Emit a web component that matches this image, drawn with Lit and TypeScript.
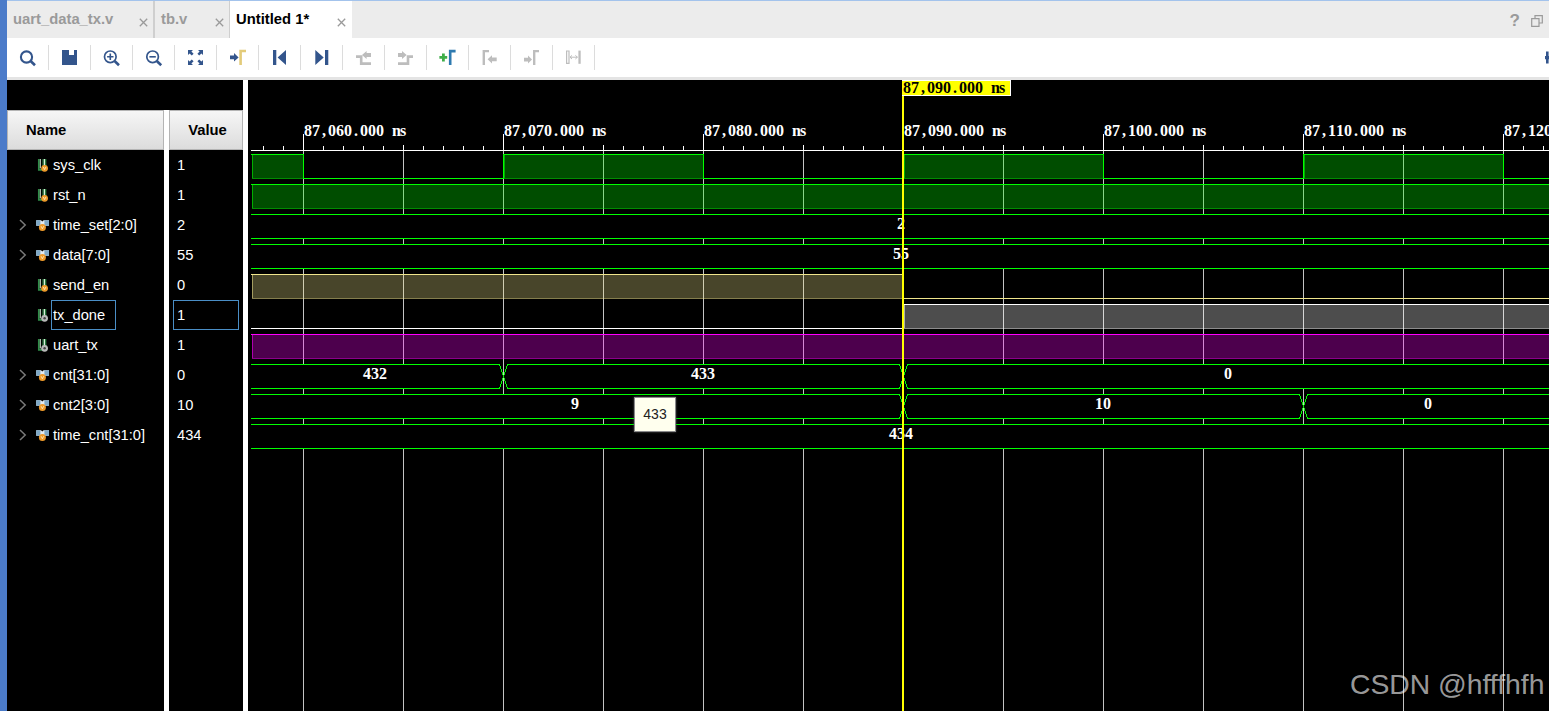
import { LitElement, html, css, svg } from "lit";
import { customElement } from "lit/decorators.js";

const BLUE = "#33558c";
const GREY = "#bdbdbd";

const toolIcons = [
  svg`<circle cx="8.5" cy="9" r="5.6" fill="none" stroke="${BLUE}" stroke-width="2.1"/><path d="M12.6 13 L17 17.2" stroke="${BLUE}" stroke-width="2.6"/>`,
  svg`<path fill-rule="evenodd" d="M2 2 H17 V17 H2 Z M9 2 H14 V7 H9 Z" fill="${BLUE}"/>`,
  svg`<circle cx="8.3" cy="8.8" r="5.8" fill="none" stroke="${BLUE}" stroke-width="1.7"/><path d="M5.1 8.8 H11.5 M8.3 5.6 V12" stroke="${BLUE}" stroke-width="1.6"/><path d="M12.6 13 L17 17.2" stroke="${BLUE}" stroke-width="2.6"/>`,
  svg`<circle cx="8.6" cy="8.8" r="5.8" fill="none" stroke="${BLUE}" stroke-width="1.7"/><path d="M5.4 8.8 H11.8" stroke="${BLUE}" stroke-width="1.6"/><path d="M12.8 13 L17.2 17.2" stroke="${BLUE}" stroke-width="2.6"/>`,
  svg`<path d="M2 2 H7 L5.4 3.6 L7.6 5.8 L5.8 7.6 L3.6 5.4 L2 7 Z M17 2 H12 L13.6 3.6 L11.4 5.8 L13.2 7.6 L15.4 5.4 L17 7 Z M2 17 H7 L5.4 15.4 L7.6 13.2 L5.8 11.4 L3.6 13.6 L2 12 Z M17 17 H12 L13.6 15.4 L11.4 13.2 L13.2 11.4 L15.4 13.6 L17 12 Z" fill="${BLUE}"/>`,
  svg`<path d="M2 7.6 H6 V5 L10.6 9.4 L6 13.6 V11.2 H2 Z" fill="${BLUE}"/><path d="M12.6 17 V3 H18" fill="none" stroke="#e3cb7a" stroke-width="2.6"/>`,
  svg`<path d="M3 2 H6.3 V17 H3 Z M16 2 V17 L7.6 9.5 Z" fill="${BLUE}"/>`,
  svg`<path d="M3.3 2 V17 L11.7 9.5 Z M13 2 H16.3 V17 H13 Z" fill="${BLUE}"/>`,
  svg`<path d="M2 8.6 H7.2 V15.6 H17" fill="none" stroke="${GREY}" stroke-width="2.6"/><path d="M17 5 H12.6 V3 L8 7 L12.6 11 V9 H17 Z" fill="${GREY}"/>`,
  svg`<path d="M2 15.6 H12 V8.6 H17" fill="none" stroke="${GREY}" stroke-width="2.6"/><path d="M2 5 H6 V3 L10.6 7 L6 11 V9 H2 Z" fill="${GREY}"/>`,
  svg`<path d="M1.4 8.1 H4 V5.4 H6.8 V8.1 H9.2 V10.8 H6.8 V13.5 H4 V10.8 H1.4 Z" fill="#3fae49"/><path d="M12.2 17 V3.1 H17.6" fill="none" stroke="#2e7ab0" stroke-width="2.6"/>`,
  svg`<path d="M3.8 17 V3.1 H9" fill="none" stroke="${GREY}" stroke-width="2.4"/><path d="M16.7 9.4 H12 V7.2 L7.6 11.3 L12 15.4 V13.2 H16.7 Z" fill="${GREY}"/>`,
  svg`<path d="M2 9.8 H6 V7.6 L10 11.6 L6 15.6 V13.4 H2 Z" fill="${GREY}"/><path d="M12.2 17 V3.1 H17" fill="none" stroke="${GREY}" stroke-width="2.4"/>`,
  svg`<path d="M2.6 3 H5 V15.4 H2.6 Z" fill="none" stroke="${GREY}" stroke-width="1.2"/><path d="M14.4 2.6 H16.7 V15.8 H14.4 Z" fill="${GREY}"/><path d="M6 9.2 H13.4 M6 9.2 L8 7.4 M6 9.2 L8 11 M13.4 9.2 L11.4 7.4 M13.4 9.2 L11.4 11" fill="none" stroke="${GREY}" stroke-width="1"/>`,
];

const vMark = (cx: number, cy: number) =>
  svg`<path d="M${cx - 1.3} ${cy - 1.3} L${cx} ${cy + 1.3} L${cx + 1.3} ${cy - 1.3}" fill="none" stroke="#fff2c8" stroke-width=".8"/>`;

const scalarIcon = (out: boolean) => svg`
  <svg class="sig" viewBox="0 0 14 14" aria-hidden="true">
    <path d="M2.8 1 V11.8 H6.4" fill="none" stroke="#2f8c48" stroke-width="1.7"/>
    <path d="M4.3 1 V10.4" fill="none" stroke="#d8ecd9" stroke-width="1"/>
    <path d="M7.1 1 V8" fill="none" stroke="#2f8c48" stroke-width="1.2"/>
    <path d="M9.7 1 V8" fill="none" stroke="#2f8c48" stroke-width="1.2"/>
    <path d="M8.4 1 V8" fill="none" stroke="#d8ecd9" stroke-width="1.2"/>
    <circle cx="8.6" cy="10.3" r="3.4" fill="${out ? "#b9b9b9" : "#ee9a2a"}"/>
    ${out ? svg`<circle cx="8.6" cy="10.3" r="1.2" fill="#444"/>` : vMark(8.6, 10.3)}
  </svg>`;

const busIcon = () => svg`
  <svg class="sig" viewBox="0 0 14 14" aria-hidden="true">
    <path d="M0.2 2.2 H5 L6.3 3.6 L7.6 2.2 H13 V7.8 H10 L6.3 9 L2.8 7.8 H0.2 Z" fill="#e2ecf2"/>
    <path d="M0.2 2.2 H4.4 L4.4 7.8 H0.2 Z M8.4 2.2 H13 V7.8 H8.4 Z" fill="#7fa9c6"/>
    <circle cx="6.4" cy="9.5" r="3.5" fill="#ee9a2a"/>
    ${vMark(6.4, 9.5)}
  </svg>`;

const chevron = () => svg`<svg class="chev" viewBox="0 0 8 12" aria-hidden="true"><path d="M1 1 L6.2 6 L1 11" fill="none" stroke="#7a7a7a" stroke-width="1.5"/></svg>`;
const closeX = () => svg`<svg class="close" viewBox="0 0 9 9" aria-hidden="true"><path d="M.8 .8 L8.2 8.2 M8.2 .8 L.8 8.2" stroke="#9a9a9a" stroke-width="1.3"/></svg>`;

type Sig = { name: string; value: string; kind: "s" | "o" | "b"; sel?: boolean };
const signals: Sig[] = [
  { name: "sys_clk", value: "1", kind: "s" },
  { name: "rst_n", value: "1", kind: "s" },
  { name: "time_set[2:0]", value: "2", kind: "b" },
  { name: "data[7:0]", value: "55", kind: "b" },
  { name: "send_en", value: "0", kind: "s" },
  { name: "tx_done", value: "1", kind: "o", sel: true },
  { name: "uart_tx", value: "1", kind: "o" },
  { name: "cnt[31:0]", value: "0", kind: "b" },
  { name: "cnt2[3:0]", value: "10", kind: "b" },
  { name: "time_cnt[31:0]", value: "434", kind: "b" },
];

const END = 1560;
const topOf = (row: number) => 154 + row * 30;

// Every glyph sits in an 8px cell, as in the simulator's fixed-pitch wave font;
// narrow punctuation is centred in its cell.
const pitch = (x: number, text: string) =>
  Array.from(text, (c, i) => x + i * 8 + (c === "," || c === "." ? 2 : 0)).join(" ");

const monoText = (x: number, y: number, text: string, cls = "") =>
  svg`<text class="${cls}" x="${pitch(x, text)}" y="${y}">${text}</text>`;

// One bit signal: spans are the [from, to] ranges during which it is high.
const bit = (row: number, spans: [number, number][], line: string, fill: string, edge: string) => {
  const t = topOf(row);
  const b = t + 24;
  const parts: unknown[] = [];
  let cur = 251;
  for (const [a, z] of spans) {
    if (a > cur) parts.push(svg`<path d="M${cur} ${b + 0.5} H${a}" stroke="${line}"/>`);
    parts.push(svg`<rect x="${a + 1}" y="${t + 1}" width="${z - a - 1}" height="${b - t - 1}" fill="${fill}"/>`);
    parts.push(svg`<path d="M${a + 1.5} ${t + 1} V${b + 0.5} H${z}" fill="none" stroke="${edge}"/>`);
    parts.push(svg`<path d="M${a} ${t + 0.5} H${z + 1}" stroke="${line}"/>`);
    if (z < END) parts.push(svg`<path d="M${z + 0.5} ${t} V${b + 1}" stroke="${line}"/>`);
    if (a > 260) parts.push(svg`<path d="M${a + 0.5} ${t} V${b + 1}" stroke="${line}"/>`);
    cur = z;
  }
  if (cur < END) parts.push(svg`<path d="M${cur} ${b + 0.5} H${END}" stroke="${line}"/>`);
  return parts;
};

// Multi bit signal: flat-started hexagons between transitions.
const bus = (row: number, cuts: number[], labels: [string, number][]) => {
  const t = topOf(row) + 0.5;
  const b = t + 24;
  const m = t + 12;
  const xs = [0, ...cuts, END + 10];
  const parts: unknown[] = [];
  for (let i = 0; i < xs.length - 1; i++) {
    const a = xs[i] + 0.5;
    const z = xs[i + 1] + 0.5;
    const d =
      i === 0
        ? `M251 ${t} H${z - 4} L${z} ${m} L${z - 4} ${b} H251`
        : `M${a + 4} ${t} H${z - 4} L${z} ${m} L${z - 4} ${b} H${a + 4} L${a} ${m} Z`;
    parts.push(svg`<path d="${d}" fill="#000" stroke="#00ff00"/>`);
  }
  for (const [text, x] of labels) {
    parts.push(monoText(x - (text.length * 8) / 2, t + 14.5, text));
  }
  return parts;
};

const range = (from: number, to: number, step: number) => {
  const r: number[] = [];
  for (let x = from; x < to; x += step) r.push(x);
  return r;
};

@customElement("app-root")
export class AppRoot extends LitElement {
  static styles = css`
    :host { display: block; height: 100vh; overflow: hidden; font-family: "Liberation Sans", Arial, sans-serif; }
    .app { display: flex; height: 100%; position: relative; background: #fff; overflow: hidden; }
    .edge { width: 7px; flex: none; background: #4b7bc9; }
    .content { flex: 1; min-width: 0; display: flex; flex-direction: column; }
    .topline { height: 1px; flex: none; background: #a3c3ec; }
    .tabs { height: 37px; flex: none; display: flex; background: #ececec; }
    .tab { box-sizing: border-box; display: flex; align-items: center; padding: 0 0 1px 6px; font-size: 14.8px; font-weight: bold; color: #9a9a9a; position: relative; }
    .t1 { width: 148px; border-right: 2px solid #cfcfcf; }
    .t2 { width: 75px; border-right: 1px solid #cfcfcf; }
    .t3 { width: 122px; background: #fff; color: #000; }
    .close { width: 9px; height: 9px; position: absolute; top: 17px; }
    .t1 .close { left: 132px; }
    .t2 .close { left: 60px; }
    .t3 .close { left: 107px; }
    .spacer { flex: 1; }
    .winbtns { display: flex; align-items: center; gap: 11px; padding: 0 6px 0 0; }
    .help { font-size: 17px; font-weight: bold; color: #9a9a9a; padding-top: 3px; }
    .restore { width: 12px; height: 12px; margin-top: 2px; }
    .toolbar { height: 39px; flex: none; display: flex; align-items: center; background: #fff; overflow: hidden; }
    .tool { box-sizing: border-box; width: 42px; height: 25px; flex: none; border-right: 1px solid #dcdcdc; padding: 3px 0 0 11px; }
    .tool svg { display: block; width: 20px; height: 20px; }
    .more { width: 14px; height: 14px; flex: none; margin-right: -10px; }
    .rule { height: 3px; flex: none; background: #e4e4e4; }
    .main { flex: 1; min-height: 0; display: flex; gap: 5px; background: #fff; }
    .signals { width: 236px; flex: none; display: flex; flex-direction: column; }
    .blank { height: 30px; flex: none; background: #000; }
    .cols { flex: 1; display: grid; grid-template-columns: 157px 74px; gap: 5px; }
    .col { background: #000; color: #fff; font-size: 14.67px; }
    .head { box-sizing: border-box; height: 40px; display: flex; align-items: center; border: 1px solid #b4b4b4; background: linear-gradient(#f6f6f6, #dcdcdc); color: #000; font-weight: bold; font-size: 14.8px; }
    .head.n { padding-left: 18px; }
    .head.v { justify-content: center; padding-left: 3px; }
    .row { height: 30px; display: flex; align-items: center; }
    .chevslot { width: 29px; padding-left: 12px; box-sizing: border-box; flex: none; display: flex; }
    .chev { width: 8px; height: 12px; }
    .sig { width: 14px; height: 14px; flex: none; }
    .label { margin-left: 3px; white-space: nowrap; }
    .label.sel { box-sizing: border-box; align-self: flex-start; height: 30px; width: 65px; margin-left: 1px; padding-left: 1px; line-height: 28px; border: 1px solid #4a8ec6; }
    .value { padding-left: 8px; }
    .value.sel { box-sizing: border-box; align-self: flex-start; height: 30px; width: 66px; margin-left: 4px; padding-left: 3px; line-height: 28px; border: 1px solid #4a8ec6; }
    .wave { flex: 1; min-width: 0; background: #000; }
    .wave svg { display: block; width: 100%; height: 100%; }
    text { font-family: "Liberation Serif", "Times New Roman", serif; font-size: 16px; font-weight: bold; fill: #fff; }
    .flagtext { fill: #000; }
    .tooltip { position: absolute; left: 634px; top: 397px; width: 42px; height: 35px; box-sizing: border-box; display: flex; align-items: center; justify-content: center; padding-bottom: 1px; background: #ffffee; border: 1px solid #8a8a8a; box-shadow: 0 0 2px #555; font-size: 14px; color: #222; }
    .mark { position: absolute; left: 1350px; top: 667px; font-size: 28.3px; line-height: 34px; color: rgba(255, 255, 255, 0.62); white-space: nowrap; pointer-events: none; }
  `;

  private renderWave() {
    const labelXs = [303, 503, 703, 903, 1103, 1303, 1503];
    const stamps = ["87,060.000 ns", "87,070.000 ns", "87,080.000 ns", "87,090.000 ns", "87,100.000 ns", "87,110.000 ns", "87,120.000 ns"];
    const green = "#00ff00";
    return svg`
      <svg viewBox="248 80 1301 631" preserveAspectRatio="xMinYMin slice" shape-rendering="crispEdges" aria-label="Waveform">
        ${range(303, END, 100).map((x) => svg`<rect x="${x}" y="151" width="1" height="560" fill="#c4c4c4"/>`)}
        <rect x="251" y="150" width="1298" height="1" fill="#fff"/>
        ${range(263, END, 20).map((x) => svg`<rect x="${x}" y="146" width="1" height="4" fill="#fff"/>`)}
        ${range(403, END, 200).map((x) => svg`<rect x="${x}" y="145" width="1" height="5" fill="#fff"/>`)}
        ${labelXs.map((x, i) => svg`<rect x="${x}" y="134" width="1" height="16" fill="#fff"/>${monoText(x + 1, 136, stamps[i])}`)}

        ${bit(0, [[251, 303], [503, 703], [903, 1103], [1303, 1503]], green, "rgba(0,255,0,.3)", "rgba(0,255,0,.55)")}
        ${bit(1, [[251, END]], green, "rgba(0,255,0,.3)", "rgba(0,255,0,.55)")}
        ${bus(2, [], [["2", 901]])}
        ${bus(3, [], [["55", 901]])}
        ${bit(4, [[251, 903]], "#f0e68c", "rgba(240,230,140,.3)", "rgba(240,230,140,.55)")}
        ${bit(5, [[903, END]], "#ffffff", "rgba(255,255,255,.3)", "rgba(255,255,255,.55)")}
        ${bit(6, [[251, END]], "#ff00ff", "rgba(255,0,255,.3)", "rgba(255,0,255,.55)")}
        ${bus(7, [503, 903], [["432", 375], ["433", 703], ["0", 1228]])}
        ${bus(8, [903, 1303], [["9", 575], ["10", 1103], ["0", 1428]])}
        ${bus(9, [], [["434", 901]])}

        <rect x="902" y="80" width="2" height="631" fill="#ffff00"/>
        <rect x="902" y="80" width="109" height="16" fill="#fff"/>
        <rect x="902" y="81" width="108" height="14" fill="#ffff00"/>
        ${monoText(903, 93, "87,090.000 ns", "flagtext")}
      </svg>`;
  }

  render() {
    return html`
      <div class="app">
        <div class="edge"></div>
        <div class="content">
          <div class="topline"></div>
          <div class="tabs">
            <div class="tab t1">uart_data_tx.v${closeX()}</div>
            <div class="tab t2">tb.v${closeX()}</div>
            <div class="tab t3">Untitled 1*${closeX()}</div>
            <div class="spacer"></div>
            <div class="winbtns">
              <span class="help">?</span>
              <svg class="restore" viewBox="0 0 12 12" aria-hidden="true"><path d="M4 3 V.7 H11.3 V8 H8.5 M.7 3.7 H8 V11.3 H.7 Z" fill="none" stroke="#9a9a9a" stroke-width="1.2"/></svg>
            </div>
          </div>
          <div class="toolbar">
            ${toolIcons.map((i) => html`<div class="tool"><svg viewBox="0 0 20 20" aria-hidden="true">${i}</svg></div>`)}
            <div class="spacer"></div>
            <svg class="more" viewBox="0 0 14 14" aria-hidden="true"><path d="M0 5 H1 V0.5 H3.6 V5 H8 V8.2 H3.6 V12.5 H1 V8.2 H0 Z" fill="${BLUE}"/></svg>
          </div>
          <div class="rule"></div>
          <div class="main">
            <div class="signals">
              <div class="blank"></div>
              <div class="cols">
                <div class="col">
                  <div class="head n">Name</div>
                  ${signals.map(
                    (s) => html`<div class="row">
                      <div class="chevslot">${s.kind === "b" ? chevron() : ""}</div>
                      ${s.kind === "b" ? busIcon() : scalarIcon(s.kind === "o")}
                      <span class="label ${s.sel ? "sel" : ""}">${s.name}</span>
                    </div>`
                  )}
                </div>
                <div class="col">
                  <div class="head v">Value</div>
                  ${signals.map((s) => html`<div class="row"><span class="value ${s.sel ? "sel" : ""}">${s.value}</span></div>`)}
                </div>
              </div>
            </div>
            <div class="wave">${this.renderWave()}</div>
          </div>
        </div>
        <div class="tooltip">433</div>
        <div class="mark">CSDN @hfffhfh</div>
      </div>
    `;
  }
}
